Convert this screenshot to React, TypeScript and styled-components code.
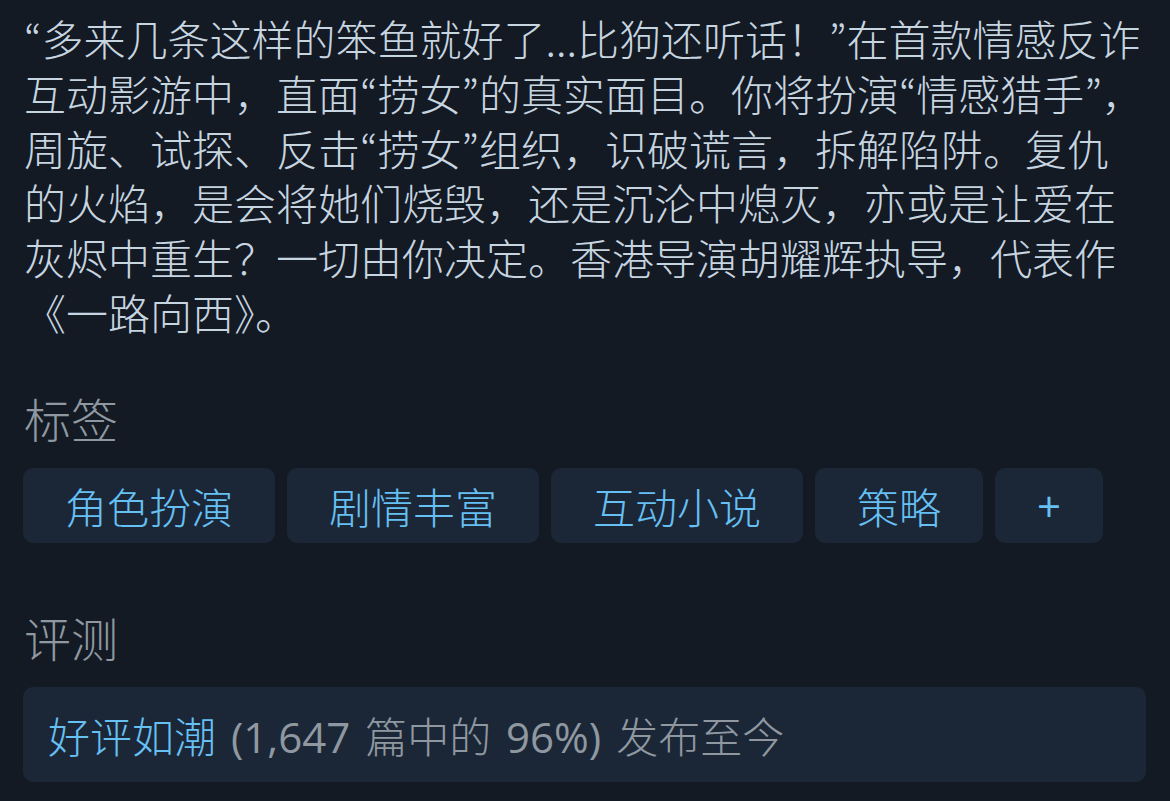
import React from "react";
import styled, { createGlobalStyle } from "styled-components";

const Global = createGlobalStyle`
  html, body { margin: 0; padding: 0; background: #131a23; }
  body { font-family: "Noto Sans CJK SC", sans-serif; }
`;

const Page = styled.div`
  width: 1170px;
  height: 801px;
  box-sizing: border-box;
  padding: 11px 24px 0 24px;
  background: #131a23;
  overflow: hidden;
  display: flex;
  flex-direction: column;
`;

const Description = styled.p`
  margin: 0;
  width: 1121px;
  font-family: "Noto Sans CJK SC", sans-serif;
  font-weight: 300;
  font-size: 42px;
  line-height: 54.8px;
  color: #c7d5e0;
`;

const Quote = styled.span`
  font-family: "Noto Sans CJK KR", "Noto Sans CJK SC", sans-serif;
`;

const SectionTitle = styled.h2<{ $top: number }>`
  margin: ${(p) => p.$top}px 0 0 0;
  font-family: "Noto Sans CJK SC", sans-serif;
  font-weight: 300;
  font-size: 47px;
  line-height: 55px;
  color: #8f98a0;
`;

const TagRow = styled.div`
  display: flex;
  gap: 12px;
  margin-top: 23px;
  margin-left: -1px;
`;

const Tag = styled.div<{ $symbol?: boolean }>`
  height: 75px;
  padding: 0 42px;
  box-sizing: border-box;
  display: flex;
  align-items: center;
  justify-content: center;
  border-radius: 10px;
  background: #1b2737;
  color: #66c0f4;
  font-family: "Open Sans", "Noto Sans CJK SC", sans-serif;
  font-weight: ${(p) => (p.$symbol ? 500 : 300)};
  font-size: 42px;
  white-space: nowrap;
`;

const ReviewBox = styled.div`
  margin-top: 23px;
  margin-left: -1px;
  width: 1123px;
  height: 95px;
  box-sizing: border-box;
  padding: 0 25px;
  display: flex;
  align-items: center;
  border-radius: 10px;
  background: #1b2737;
`;

const ReviewText = styled.span`
  font-family: "Open Sans", "Noto Sans CJK SC", sans-serif;
  font-weight: 300;
  font-size: 42px;
  word-spacing: 4px;
  color: #8f98a0;
  white-space: pre;
`;

const Rating = styled.span`
  color: #66c0f4;
`;

const Count = styled.span`
  font-weight: 400;
`;

const TEXT =
  "“多来几条这样的笨鱼就好了...比狗还听话！”在首款情感反诈互动影游中，直面“捞女”的真实面目。你将扮演“情感猎手”，周旋、试探、反击“捞女”组织，识破谎言，拆解陷阱。复仇的火焰，是会将她们烧毁，还是沉沦中熄灭，亦或是让爱在灰烬中重生？一切由你决定。香港导演胡耀辉执导，代表作《一路向西》。";

function renderText(s: string) {
  return s.split(/([“”])/).map((part, i) =>
    part === "“" || part === "”" ? <Quote key={i}>{part}</Quote> : <React.Fragment key={i}>{part}</React.Fragment>
  );
}

export default function App() {
  const tags = ["角色扮演", "剧情丰富", "互动小说", "策略"];
  return (
    <>
      <Global />
      <Page>
        <Description>{renderText(TEXT)}</Description>
        <SectionTitle $top={50}>标签</SectionTitle>
        <TagRow>
          {tags.map((t) => (
            <Tag key={t}>{t}</Tag>
          ))}
          <Tag $symbol>+</Tag>
        </TagRow>
        <SectionTitle $top={66}>评测</SectionTitle>
        <ReviewBox>
          <ReviewText>
            <Rating>好评如潮</Rating>{" "}<Count>(1,647</Count>{" 篇中的 "}<Count>96%)</Count>{" 发布至今"}
          </ReviewText>
        </ReviewBox>
      </Page>
    </>
  );
}
